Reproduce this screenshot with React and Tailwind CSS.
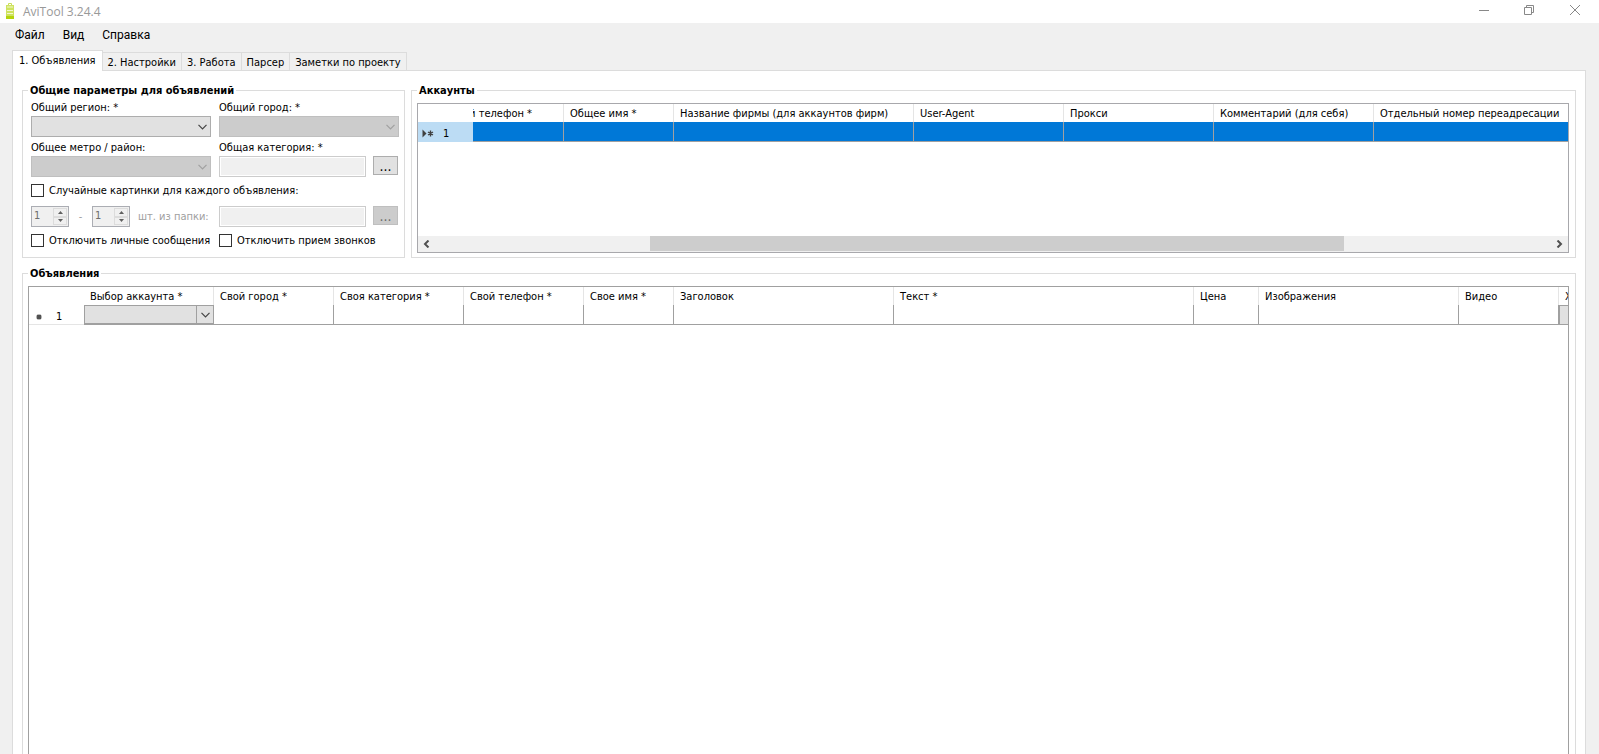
import { useState } from 'react';

const tabs = ['1. Объявления', '2. Настройки', '3. Работа', 'Парсер', 'Заметки по проекту'];

const accountColumns = [
  { title: 'Общее имя *', col: 'w-[110px]' },
  { title: 'Название фирмы (для аккаунтов фирм)', col: 'w-[240px]' },
  { title: 'User-Agent', col: 'w-[150px]' },
  { title: 'Прокси', col: 'w-[150px]' },
  { title: 'Комментарий (для себя)', col: 'w-[160px]' },
  { title: 'Отдельный номер переадресации', col: '' },
];

const adColumns = [
  { title: 'Свой город *', col: 'w-[120px]' },
  { title: 'Своя категория *', col: 'w-[130px]' },
  { title: 'Свой телефон *', col: 'w-[120px]' },
  { title: 'Свое имя *', col: 'w-[90px]' },
  { title: 'Заголовок', col: 'w-[220px]' },
  { title: 'Текст *', col: 'w-[300px]' },
  { title: 'Цена', col: 'w-[65px]' },
  { title: 'Изображения', col: 'w-[200px]' },
  { title: 'Видео', col: 'w-[100px]' },
];

const Chevron = ({ className = '' }) => (
  <svg className={className} width="9" height="6" viewBox="0 0 9 6" fill="none" stroke="currentColor" strokeWidth="1.2">
    <path d="M0.5 0.8 L4.5 4.8 L8.5 0.8" />
  </svg>
);

const ComboBox = ({ id, disabled }) => (
  <div className="relative h-[21px]">
    <select
      id={id}
      disabled={disabled}
      className={`block w-full h-full appearance-none border px-1 ${
        disabled ? 'bg-[#cccccc] border-[#bfbfbf]' : 'bg-[#e1e1e1] border-[#adadad]'
      }`}
    >
      <option></option>
    </select>
    <Chevron className={`absolute right-1 top-2 pointer-events-none ${disabled ? 'text-[#a0a0a0]' : 'text-[#444444]'}`} />
  </div>
);

const PathInput = ({ id, label, disabled }) => (
  <div className="flex items-start gap-[7px]">
    <input
      id={id}
      type="text"
      readOnly
      aria-label={label}
      className="w-[147px] h-[21px] bg-[#f0f0f0] border border-[#cccccc] px-1 shadow-[inset_0_0_0_1px_#ffffff]"
    />
    <button
      type="button"
      disabled={disabled}
      className={`w-[25px] h-[19px] text-sm leading-[14px] border ${
        disabled ? 'bg-[#cccccc] border-[#bfbfbf] text-[#6d6d6d]' : 'bg-[#e1e1e1] border-[#adadad]'
      }`}
    >
      ...
    </button>
  </div>
);

const Spinner = ({ label }) => (
  <div className="flex w-[38px] h-[21px] bg-[#f0f0f0] border border-[#abadb3] p-px">
    <input type="text" disabled defaultValue="1" aria-label={label} className="w-5 h-[15px] pl-px text-[#6d6d6d]" />
    <div className="flex flex-col flex-1">
      <button type="button" disabled aria-label="Больше" className="flex flex-1 items-center justify-center border border-[#dcdcdc] bg-[#f0f0f0]">
        <svg width="5" height="3" viewBox="0 0 5 3" fill="#606060"><path d="M0 3 L2.5 0 L5 3 Z" /></svg>
      </button>
      <button type="button" disabled aria-label="Меньше" className="flex flex-1 items-center justify-center border border-[#dcdcdc] bg-[#f0f0f0]">
        <svg width="5" height="3" viewBox="0 0 5 3" fill="#606060"><path d="M0 0 L2.5 3 L5 0 Z" /></svg>
      </button>
    </div>
  </div>
);

const CheckBox = ({ children, className = '' }) => (
  <label className={`flex items-start gap-[5px] h-[14px] whitespace-nowrap ${className}`}>
    <input type="checkbox" className="appearance-none w-[13px] h-[13px] bg-white border border-[#333333] checked:bg-[#333333]" />
    {children}
  </label>
);

const GroupBox = ({ title, className, children }) => (
  <fieldset className={`min-w-0 pl-[5px] pr-[6px] border border-[#dcdcdc] ${className}`}>
    <legend className="px-[2px] pt-px font-bold leading-[14px]">{title}</legend>
    {children}
  </fieldset>
);

const HeadCell = ({ children }) => (
  <th className="h-[18px] px-[6px] pt-[2px] pb-0 text-left font-normal border-r border-[#e5e5e5] last:border-r-0 whitespace-nowrap overflow-hidden">
    {children}
  </th>
);

const TitleBar = () => (
  <header className="flex items-start justify-between h-[23px] bg-white shrink-0">
    <div className="flex gap-[9px] pl-[6px] pt-[3px] text-xs text-[#999999] font-['Open_Sans','Noto_Sans',sans-serif]">
      <svg className="shrink-0" width="8" height="16" viewBox="0 0 8 16">
        <path d="M2.5 2.5 V0.5 H5.5 V2.5" fill="none" stroke="#c8de5a" />
        <rect x="0" y="2" width="8" height="14" fill="#cfe35f" />
        <path d="M1 4 H7 M1 7.5 H7 M1 10.5 H7" stroke="#f3f8d2" />
        <path d="M0 14.5 H8" stroke="#b4d40c" strokeWidth="3" />
      </svg>
      <span className="leading-[18px]">AviTool 3.24.4</span>
    </div>
    <div className="flex text-[#888888]">
      <button type="button" aria-label="Свернуть" className="flex w-[45px] h-5 items-center justify-center">
        <svg width="10" height="10" viewBox="0 0 10 10" stroke="currentColor"><path d="M0 5.5 H10" /></svg>
      </button>
      <button type="button" aria-label="Развернуть" className="flex w-[45px] h-5 items-center justify-center">
        <svg width="10" height="10" viewBox="0 0 10 10" fill="none" stroke="currentColor">
          <path d="M0.5 2.5 H7.5 V9.5 H0.5 Z M2.5 2.5 V0.5 H9.5 V7.5 H7.5" />
        </svg>
      </button>
      <button type="button" aria-label="Закрыть" className="flex w-12 h-5 items-center justify-center">
        <svg width="10" height="10" viewBox="0 0 10 10" stroke="currentColor"><path d="M0 0 L10 10 M10 0 L0 10" /></svg>
      </button>
    </div>
  </header>
);

const CommonParams = () => (
  <GroupBox title="Общие параметры для объявлений" className="w-[383px] shrink-0 pb-[9px]">
    <div className="pl-[3px] pt-[2px]">
      <div className="grid grid-cols-[180px_180px] gap-x-2 gap-y-[3px]">
        <div>
          <label htmlFor="region" className="block h-4 leading-4">Общий регион: *</label>
          <ComboBox id="region" />
        </div>
        <div>
          <label htmlFor="city" className="block h-4 leading-4">Общий город: *</label>
          <ComboBox id="city" disabled />
        </div>
        <div>
          <label htmlFor="metro" className="block h-4 leading-4">Общее метро / район:</label>
          <ComboBox id="metro" disabled />
        </div>
        <div>
          <label htmlFor="category" className="block h-4 leading-4">Общая категория: *</label>
          <PathInput id="category" />
        </div>
      </div>

      <CheckBox className="mt-[7px]">Случайные картинки для каждого объявления:</CheckBox>

      <div className="grid grid-cols-[180px_180px] gap-x-2 mt-2">
        <div className="flex items-center text-[#a0a0a0] whitespace-nowrap">
          <Spinner label="От" />
          <span className="w-[23px] text-center">-</span>
          <Spinner label="До" />
          <span className="pl-2">шт. из папки:</span>
        </div>
        <PathInput id="folder" label="Папка" disabled />
      </div>

      <div className="grid grid-cols-[180px_180px] gap-x-2 mt-[7px]">
        <CheckBox>Отключить личные сообщения</CheckBox>
        <CheckBox>Отключить прием звонков</CheckBox>
      </div>
    </div>
  </GroupBox>
);

const Accounts = () => (
  <GroupBox title="Аккаунты" className="flex-1 pb-1">
    <div className="flex flex-col h-[150px] mt-[5px] border border-[#a8a8ac]">
      <table className="w-full table-fixed border-separate border-spacing-0">
        <colgroup>
          <col className="w-[55px]" />
          <col className="w-[91px]" />
          {accountColumns.map(c => <col key={c.title} className={c.col} />)}
        </colgroup>
        <thead>
          <tr>
            <th></th>
            <th className="h-[18px] px-0 pt-[2px] pb-0 font-normal border-r border-[#e5e5e5]">
              {/* колонка частично прокручена влево */}
              <div className="flex justify-end overflow-hidden whitespace-nowrap pr-[31px]">
                <span>Свой телефон *</span>
              </div>
            </th>
            {accountColumns.map(c => <HeadCell key={c.title}>{c.title}</HeadCell>)}
          </tr>
        </thead>
        <tbody>
          <tr>
            <td className="h-5 px-0 pt-[3px] pb-0 bg-[#bcdcf4]">
              <div className="flex items-center pl-[4px] gap-[9px]">
                <svg width="12" height="9" viewBox="0 0 12 9" fill="#404040" stroke="#404040">
                  <path d="M0.5 0.5 L4.5 4.5 L0.5 8.5 Z" stroke="none" />
                  <path d="M8.5 1.5 V7.5 M6 3 L11 6 M11 3 L6 6" strokeWidth="1.4" />
                </svg>
                1
              </div>
            </td>
            <td className="bg-[#0078d7] border-r border-b border-[#a0a0a0]"></td>
            {accountColumns.map(c => (
              <td key={c.title} className="bg-[#0078d7] border-r border-b border-[#a0a0a0] last:border-r-0"></td>
            ))}
          </tr>
        </tbody>
      </table>

      <div className="flex h-4 mt-auto bg-[#f0f0f0] text-[#505050]">
        <button type="button" aria-label="Влево" className="flex w-[17px] items-center justify-center">
          <svg width="7" height="8" viewBox="0 0 7 8" fill="none" stroke="currentColor" strokeWidth="2"><path d="M5.5 0.5 L2 4 L5.5 7.5" /></svg>
        </button>
        <div className="grow-[215]"></div>
        <div className="grow-[694] h-[15px] bg-[#cdcdcd]"></div>
        <div className="grow-[207]"></div>
        <button type="button" aria-label="Вправо" className="flex w-[17px] items-center justify-center">
          <svg width="7" height="8" viewBox="0 0 7 8" fill="none" stroke="currentColor" strokeWidth="2"><path d="M1.5 0.5 L5 4 L1.5 7.5" /></svg>
        </button>
      </div>
    </div>
  </GroupBox>
);

const Ads = () => (
  <GroupBox title="Объявления" className="flex flex-col flex-1 mt-2 border-b-0">
    <div className="flex-1 mt-[5px] border border-b-0 border-[#a0a0a0] overflow-hidden">
      <table className="w-full table-fixed border-separate border-spacing-0">
        <colgroup>
          <col className="w-[55px]" />
          <col className="w-[130px]" />
          {adColumns.map(c => <col key={c.title} className={c.col} />)}
          <col />
        </colgroup>
        <thead>
          <tr>
            <th></th>
            <HeadCell>Выбор аккаунта *</HeadCell>
            {adColumns.map(c => <HeadCell key={c.title}>{c.title}</HeadCell>)}
            <HeadCell>Х</HeadCell>
          </tr>
        </thead>
        <tbody>
          <tr>
            <td className="h-5 px-0 pt-[4px] pb-0 border-b border-[#e5e5e5]">
              <div className="flex items-center pl-[7px] gap-[14px]">
                <svg width="6" height="6" viewBox="0 0 7 7" stroke="#505050" strokeWidth="1.8">
                  <path d="M3.5 0.5 V6.5 M0.5 3.5 H6.5 M1.2 1.2 L5.8 5.8 M5.8 1.2 L1.2 5.8" />
                </svg>
                1
              </div>
            </td>
            <td className="p-0 border-b border-[#a0a0a0]">
              <div className="relative h-[19px]">
                <select aria-label="Выбор аккаунта" className="block w-full h-full appearance-none bg-[#e1e1e1] border border-[#a0a0a0]">
                  <option></option>
                </select>
                <span className="absolute right-0 top-0 flex w-[18px] h-full items-center justify-center border border-[#a0a0a0] text-[#444444] pointer-events-none">
                  <Chevron />
                </span>
              </div>
            </td>
            {adColumns.map(c => <td key={c.title} className="border-r border-b border-[#a0a0a0]"></td>)}
            <td className="bg-[#e1e1e1] border border-r-0 border-[#a0a0a0]"></td>
          </tr>
        </tbody>
      </table>
    </div>
  </GroupBox>
);

const App = () => {
  const [active, setActive] = useState(0);

  return (
    <div className="flex flex-col h-screen overflow-hidden bg-[#f0f0f0] text-black text-[11px] leading-[14px] font-['DejaVu_Sans_Condensed','DejaVu_Sans',sans-serif]">
      <TitleBar />

      <nav className="flex h-[27px] shrink-0 pl-[15px] pt-1 gap-[18px] text-xs font-['Roboto','Noto_Sans',sans-serif]">
        <button type="button" className="h-4">Файл</button>
        <button type="button" className="h-4">Вид</button>
        <button type="button" className="h-4">Справка</button>
      </nav>

      <div className="flex flex-col flex-1 min-h-0 pl-3 pr-[13px]">
        <div role="tablist" className="flex items-end">
          {tabs.map((tab, i) => (
            <button
              key={tab}
              type="button"
              role="tab"
              aria-selected={active === i}
              onClick={() => setActive(i)}
              className={`whitespace-nowrap border-t border-r border-[#dcdcdc] ${
                active === i ? 'relative h-[21px] -mb-px px-[6px] border-l bg-white' : 'h-[18px] px-[5px] pt-[2px]'
              }`}
            >
              {tab}
            </button>
          ))}
        </div>

        <main className="flex flex-col flex-1 border border-b-0 border-[#dcdcdc] bg-white px-[9px] pt-3">
          <div className="flex gap-[6px]">
            <CommonParams />
            <Accounts />
          </div>
          <Ads />
        </main>
      </div>
    </div>
  );
};

export default App;
